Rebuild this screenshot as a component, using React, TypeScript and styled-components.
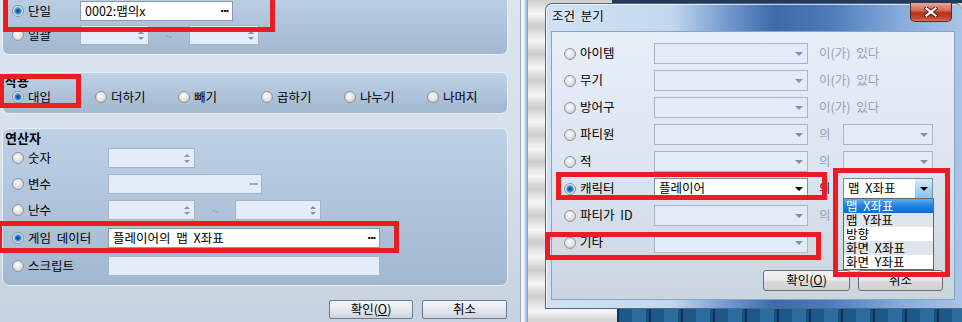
import React from 'react'
import styled, { createGlobalStyle } from 'styled-components'

const GlobalStyle = createGlobalStyle`
  html, body {
    margin: 0;
    padding: 0;
  }
  body {
    width: 962px;
    height: 322px;
    overflow: hidden;
    font-family: 'Noto Sans CJK KR', 'Noto Sans', sans-serif;
    font-size: 12.5px;
    word-spacing: 3px;
    color: #000;
  }
  * {
    box-sizing: border-box;
  }
`

const Screen = styled.div`
  position: relative;
  width: 962px;
  height: 322px;
  display: flex;
  overflow: hidden;
`

/* red annotation boxes drawn over the screenshot */
const Mark = styled.div<{ $x: number; $y: number; $w: number; $h: number }>`
  position: absolute;
  left: ${p => p.$x}px;
  top: ${p => p.$y}px;
  width: ${p => p.$w}px;
  height: ${p => p.$h}px;
  border: 5px solid #ed1c24;
  z-index: 10;
  pointer-events: none;
`

/* ---------- left dialog ---------- */
const LeftPane = styled.div`
  width: 520px;
  flex-shrink: 0;
  display: flex;
  flex-direction: column;
  padding: 0 12px 0 2px;
  background: linear-gradient(180deg, #dbe5ef 0%, #d5dfea 55%, #c6d2df 100%);
`

const Group = styled.div<{ $h: number; $mt: number }>`
  height: ${p => p.$h}px;
  margin-top: ${p => p.$mt}px;
  flex-shrink: 0;
  border: 1px solid #e8eef6;
  border-radius: 7px;
  background: linear-gradient(180deg, #bdd1e6 0%, #a2b8d0 100%);
  padding-left: 9px;
  display: flex;
  flex-direction: column;
`

const GroupTitle = styled.div<{ $mt: number; $h: number }>`
  margin: ${p => p.$mt}px 0 0 -7px;
  height: ${p => p.$h}px;
  line-height: ${p => p.$h}px;
  font-size: 13px;
  font-weight: bold;
`

const Row = styled.div<{ $mt: number }>`
  display: flex;
  align-items: center;
  height: 20px;
  margin-top: ${p => p.$mt}px;
`

const OpRow = styled.div`
  display: grid;
  grid-template-columns: repeat(6, 83px);
  align-items: center;
  height: 16px;
`

const RadioItem = styled.div<{ $w?: number }>`
  display: flex;
  align-items: center;
  gap: 4px;
  width: ${p => (p.$w ? `${p.$w}px` : 'auto')};
  flex-shrink: 0;
  white-space: nowrap;
  line-height: 1;
`

const Radio = styled.span<{ $on?: boolean }>`
  width: 12px;
  height: 12px;
  flex-shrink: 0;
  border-radius: 50%;
  border: 1px solid #8e959e;
  background: ${p =>
    p.$on
      ? 'radial-gradient(circle at 50% 50%, #0a3c78 0, #1c6cc2 1.8px, #5aaeea 3.4px, #e6e6e6 4.4px, #c4c4c4 100%)'
      : 'radial-gradient(circle at 45% 40%, #ffffff 0, #e8e8e8 40%, #c0c0c0 100%)'};
`

const Field = styled.div<{ $w: number; $on?: boolean }>`
  width: ${p => p.$w}px;
  height: 20px;
  flex-shrink: 0;
  display: flex;
  align-items: center;
  justify-content: space-between;
  padding: 0 4px 0 4px;
  border: 1px solid ${p => (p.$on ? '#8a99ab' : '#a6b4c5')};
  background: ${p => (p.$on ? '#ffffff' : '#e3edf9')};
  white-space: nowrap;
  line-height: 1;
`

const Dots = styled.span<{ $dim?: boolean }>`
  margin-left: auto;
  font-family: 'DejaVu Sans', sans-serif;
  font-size: 11px;
  font-weight: bold;
  letter-spacing: -1.5px;
  color: ${p => (p.$dim ? '#8e98aa' : '#000')};
`

const SpinArrows = styled.span`
  margin-left: auto;
  display: flex;
  flex-direction: column;
  gap: 3px;
  &::before,
  &::after {
    content: '';
    border-left: 3px solid transparent;
    border-right: 3px solid transparent;
  }
  &::before {
    border-bottom: 3px solid #8a93aa;
  }
  &::after {
    border-top: 3px solid #8a93aa;
  }
`

const Tilde = styled.span`
  width: 40px;
  flex-shrink: 0;
  text-align: center;
  color: #8d99ad;
`

const LButtons = styled.div`
  display: flex;
  justify-content: flex-end;
  gap: 9px;
  margin-top: 14px;
  padding-right: 1px;
`

const LButton = styled.button<{ $w: number }>`
  width: ${p => p.$w}px;
  height: 19px;
  padding: 0;
  border: 1px solid #6c7b8f;
  border-radius: 2px;
  background: linear-gradient(180deg, #f6f8fa 0%, #e5e9ee 50%, #cdd3db 100%);
  font-family: inherit;
  font-size: 12.5px;
  line-height: 1;
  color: #000;
`

const Splitter = styled.div`
  width: 8px;
  flex-shrink: 0;
  background: linear-gradient(90deg, #9fabba 0, #9fabba 1px, #e4ecf5 1px, #f7fafd 3px, #c5d9f1 5px, #94b4dc 7px, #6f90bd 8px);
`

/* ---------- right side ---------- */
const RightArea = styled.div`
  flex: 1;
  display: flex;
  align-items: flex-start;
  padding: 3px 0 0 17px;
  background:
    linear-gradient(#213b5c, #213b5c) 84px 0 / calc(100% - 84px) 3px no-repeat,
    repeating-linear-gradient(90deg, #0d3255 0 2px, #1d5889 2px 15px, #2b6d9e 15px 29px, #1a4f80 29px 32px) 89px 100% / calc(100% - 89px) 13px no-repeat,
    repeating-linear-gradient(180deg, #cccccc 0, #e3e3e3 7px, #f6f6f6 14px, #dedede 21px, #cccccc 27px);
`

const Dialog = styled.div`
  width: 417px;
  height: 306px;
  flex-shrink: 0;
  display: flex;
  flex-direction: column;
  padding: 0 7px 8px 5px;
  border: 1px solid #4d6889;
  border-right: none;
  border-radius: 7px 7px 0 0;
  background: linear-gradient(90deg, #d0e1f3 0%, #c3d8ee 30%, #6f98cf 44%, #3d6aa9 55%, #4c7bba 68%, #86abdb 85%, #a8c5e8 100%);
  box-shadow: inset 1px 1px 0 rgba(255, 255, 255, 0.7);
`

const TitleBar = styled.div`
  height: 27px;
  display: flex;
  justify-content: space-between;
  align-items: flex-start;
  padding-left: 1px;
`

const Title = styled.span`
  line-height: 24px;
  text-shadow: 0 0 6px rgba(255, 255, 255, 0.9);
`

const CloseBtn = styled.div`
  width: 42px;
  height: 19px;
  margin: -1px 3px 0 0;
  display: flex;
  align-items: center;
  justify-content: center;
  border: 1px solid #5a2620;
  border-top: none;
  border-radius: 0 0 5px 5px;
  background: linear-gradient(180deg, #eaa898 0%, #d8664f 42%, #b93019 55%, #c5472f 85%, #d9775f 100%);
`

const Client = styled.div`
  flex: 1;
  display: flex;
  flex-direction: column;
  padding: 11px 0 0 12px;
  border: 1px solid #8ba3c2;
  background: linear-gradient(180deg, #e7eff9 0%, #dde6f1 45%, #cbd5e0 100%);
`

const CondRow = styled.div`
  display: flex;
  align-items: center;
  height: 21px;
  margin-bottom: 6px;
`

const Combo = styled.div<{ $w: number; $on?: boolean }>`
  position: relative;
  width: ${p => p.$w}px;
  height: 21px;
  flex-shrink: 0;
  display: flex;
  align-items: center;
  justify-content: space-between;
  padding-left: 4px;
  border: 1px solid ${p => (p.$on ? '#7e8ea2' : '#a8b6c8')};
  background: ${p => (p.$on ? '#ffffff' : '#e2ecf8')};
  white-space: nowrap;
  line-height: 1;
`

const ComboArrow = styled.span<{ $on?: boolean; $hot?: boolean }>`
  width: 17px;
  height: 100%;
  margin-left: auto;
  display: flex;
  align-items: center;
  justify-content: center;
  background: ${p => (p.$hot ? 'linear-gradient(180deg, #d6edfb 0%, #afd6f1 50%, #8cc1e7 100%)' : 'transparent')};
  &::after {
    content: '';
    border-left: 4px solid transparent;
    border-right: 4px solid transparent;
    border-top: 4px solid ${p => (p.$on ? '#000' : '#8b8ca9')};
  }
`

const Tail = styled.span<{ $w?: number; $on?: boolean }>`
  margin-left: 11px;
  width: ${p => (p.$w ? `${p.$w}px` : 'auto')};
  flex-shrink: 0;
  color: ${p => (p.$on ? '#222' : '#97a1b5')};
  white-space: nowrap;
  line-height: 1;
`

const DropList = styled.ul`
  position: absolute;
  left: -1px;
  top: 100%;
  width: 91px;
  margin: 0;
  padding: 0;
  list-style: none;
  border: 1px solid #646464;
  background: #ffffff;
  z-index: 5;
`

const DropItem = styled.li<{ $sel?: boolean; $alt?: boolean }>`
  height: 14px;
  line-height: 14px;
  padding-left: 2px;
  white-space: nowrap;
  color: ${p => (p.$sel ? '#fff' : '#000')};
  background: ${p =>
    p.$sel ? 'linear-gradient(180deg, #5db0f2 0%, #1f82e2 50%, #0c6bd6 100%)' : p.$alt ? '#dfe5ec' : '#ffffff'};
`

const RButtons = styled.div`
  display: flex;
  justify-content: flex-end;
  gap: 8px;
  margin-top: 11px;
  padding-right: 11px;
`

const RButton = styled.button<{ $w: number }>`
  width: ${p => p.$w}px;
  height: 21px;
  padding: 0;
  border: 1px solid #707070;
  border-radius: 3px;
  background: linear-gradient(180deg, #f3f3f3 0%, #ebebeb 48%, #dcdcdc 52%, #cfcfcf 100%);
  font-family: inherit;
  font-size: 12.5px;
  line-height: 1;
  color: #000;
`

const opItems = ['대입', '더하기', '빼기', '곱하기', '나누기', '나머지']

const dropItems = ['맵 X좌표', '맵 Y좌표', '방향', '화면 X좌표', '화면 Y좌표']

type Cond = { label: string; tail?: 'exists' | 'of'; on?: boolean; value?: string }

const conds: Cond[] = [
  { label: '아이템', tail: 'exists' },
  { label: '무기', tail: 'exists' },
  { label: '방어구', tail: 'exists' },
  { label: '파티원', tail: 'of' },
  { label: '적', tail: 'of' },
  { label: '캐릭터', tail: 'of', on: true, value: '플레이어' },
  { label: '파티가 ID', tail: 'of' },
  { label: '기타' },
]

export default function App() {
  return (
    <Screen>
      <GlobalStyle />

      {/* 변수 조작 */}
      <LeftPane>
        <Group $h={65} $mt={-10}>
          <Row $mt={10}>
            <RadioItem $w={68}>
              <Radio $on />
              단일
            </RadioItem>
            <Field $w={153} $on>
              0002:맵의x
              <Dots>···</Dots>
            </Field>
          </Row>
          <Row $mt={4}>
            <RadioItem $w={68}>
              <Radio />
              일괄
            </RadioItem>
            <Field $w={69}>
              <SpinArrows />
            </Field>
            <Tilde>~</Tilde>
            <Field $w={70}>
              <SpinArrows />
            </Field>
          </Row>
        </Group>

        {/* 작용 */}
        <Group $h={42} $mt={17}>
          <GroupTitle $mt={0} $h={16}>작용</GroupTitle>
          <OpRow>
            {opItems.map((t, i) => (
              <RadioItem key={t}>
                <Radio $on={i === 0} />
                {t}
              </RadioItem>
            ))}
          </OpRow>
        </Group>

        {/* 연산자 */}
        <Group $h={158} $mt={14}>
          <GroupTitle $mt={2} $h={14}>연산자</GroupTitle>
          <Row $mt={3}>
            <RadioItem $w={96}>
              <Radio />
              숫자
            </RadioItem>
            <Field $w={87}>
              <SpinArrows />
            </Field>
          </Row>
          <Row $mt={6}>
            <RadioItem $w={96}>
              <Radio />
              변수
            </RadioItem>
            <Field $w={154}>
              <Dots $dim>···</Dots>
            </Field>
          </Row>
          <Row $mt={6}>
            <RadioItem $w={96}>
              <Radio />
              난수
            </RadioItem>
            <Field $w={87}>
              <SpinArrows />
            </Field>
            <Tilde>~</Tilde>
            <Field $w={86}>
              <SpinArrows />
            </Field>
          </Row>
          <Row $mt={8}>
            <RadioItem $w={96}>
              <Radio $on />
              게임 데이터
            </RadioItem>
            <Field $w={272} $on>
              플레이어의 맵 X좌표
              <Dots>···</Dots>
            </Field>
          </Row>
          <Row $mt={8}>
            <RadioItem $w={96}>
              <Radio />
              스크립트
            </RadioItem>
            <Field $w={272} />
          </Row>
        </Group>

        <LButtons>
          <LButton $w={84}>
            확인(<u>O</u>)
          </LButton>
          <LButton $w={85}>취소</LButton>
        </LButtons>
      </LeftPane>

      <Splitter />

      {/* 조건 분기 */}
      <RightArea>
        <Dialog>
          <TitleBar>
            <Title>조건 분기</Title>
            <CloseBtn>
              <svg width="14" height="10" viewBox="0 0 14 10">
                <path d="M2.5 1.5 L11.5 8.5 M11.5 1.5 L2.5 8.5" stroke="#4b1810" strokeWidth="4" strokeLinecap="square" />
                <path d="M2.5 1.5 L11.5 8.5 M11.5 1.5 L2.5 8.5" stroke="#ffffff" strokeWidth="2.2" strokeLinecap="square" />
              </svg>
            </CloseBtn>
          </TitleBar>
          <Client>
            {conds.map(c => (
              <CondRow key={c.label}>
                <RadioItem $w={90}>
                  <Radio $on={c.on} />
                  {c.label}
                </RadioItem>
                <Combo $w={154} $on={c.on}>
                  {c.value}
                  <ComboArrow $on={c.on} />
                </Combo>
                {c.tail === 'exists' && <Tail>이(가) 있다</Tail>}
                {c.tail === 'of' && (
                  <>
                    <Tail $w={24} $on={c.on}>
                      의
                    </Tail>
                    <Combo $w={90} $on={c.on}>
                      {c.on && '맵 X좌표'}
                      <ComboArrow $on={c.on} $hot={c.on} />
                      {c.on && (
                        <DropList>
                          {dropItems.map((d, i) => (
                            <DropItem key={d} $sel={i === 0} $alt={i % 2 === 1}>
                              {d}
                            </DropItem>
                          ))}
                        </DropList>
                      )}
                    </Combo>
                  </>
                )}
              </CondRow>
            ))}
            <RButtons>
              <RButton $w={87}>
                확인(<u>O</u>)
              </RButton>
              <RButton $w={85}>취소</RButton>
            </RButtons>
          </Client>
        </Dialog>
      </RightArea>

      <Mark $x={3} $y={-6} $w={272} $h={38} />
      <Mark $x={-1} $y={74} $w={82} $h={34} />
      <Mark $x={-3} $y={221} $w={402} $h={32} />
      <Mark $x={556} $y={172} $w={271} $h={28} />
      <Mark $x={545} $y={232} $w={276} $h={28} />
      <Mark $x={833} $y={168} $w={117} $h={109} />
    </Screen>
  )
}
